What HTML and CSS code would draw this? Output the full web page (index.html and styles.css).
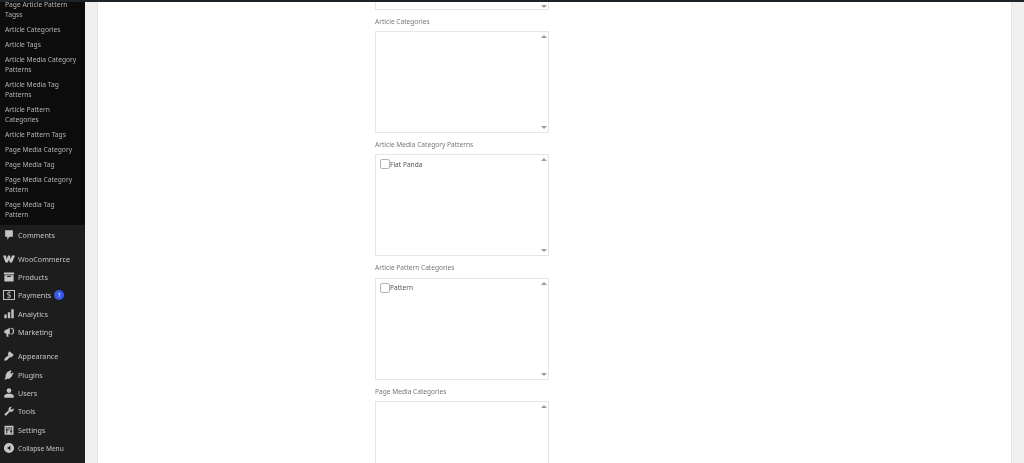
FILE: index.html
```html
<!DOCTYPE html>
<html lang="en">
<head>
  <meta charset="UTF-8"/>
  <title>Edit Article</title>
  <link rel="stylesheet" href="styles.css">
</head>
<body>

  <div class="top-bar"></div>

  <div class="admin-wrap">
    <nav class="admin-menu">
      <ul class="submenu">
        <li>Page Article Pattern Tagss</li>
        <li>Article Categories</li>
        <li>Article Tags</li>
        <li>Article Media Category Patterns</li>
        <li>Article Media Tag Patterns</li>
        <li>Article Pattern Categories</li>
        <li>Article Pattern Tags</li>
        <li>Page Media Category</li>
        <li>Page Media Tag</li>
        <li>Page Media Category Pattern</li>
        <li>Page Media Tag Pattern</li>
      </ul>

      <ul class="main-menu">
        <li class="menu-item">
          <svg class="menu-icon" viewBox="-1 -1 14 14"><path d="M1.500 .5h9v7.500H6.500L4 11.500V8H1.500z"/></svg>
          <span class="menu-label">Comments</span>
        </li>
        <li class="menu-sep"></li>
        <li class="menu-item">
          <svg class="menu-icon" viewBox="0 0 12 12"><path d="M0 2.500h3l.6 3.700L5 2.500h2l.6 3.700L9 2.500h3L9 9.500H6.800L6 6.500 4.700 9.500H2.500z"/></svg>
          <span class="menu-label">WooCommerce</span>
        </li>
        <li class="menu-item">
          <svg class="menu-icon" viewBox="-.5 -.5 13 13"><path d="M0.500 1h11v2.300h-11zM1 4h10V11H1zM4 5v1h4V5z" fill-rule="evenodd"/></svg>
          <span class="menu-label">Products</span>
        </li>
        <li class="menu-item">
          <svg class="menu-icon" viewBox="0 0 12 12"><rect x="0.500" y="1.500" width="11" height="9" fill="none" stroke="currentColor"/><text x="6" y="9" font-size="8" font-family="Noto Sans" text-anchor="middle">$</text></svg>
          <span class="menu-label">Payments</span>
          <span class="badge">1</span>
        </li>
        <li class="menu-item">
          <svg class="menu-icon" viewBox="-1 -1 14 14"><path d="M.5 6.500h2.800V11H.5zM4.600 4h2.800v7H4.600zM8.700 .5h2.800V11H8.700z"/></svg>
          <span class="menu-label">Analytics</span>
        </li>
        <li class="menu-item">
          <svg class="menu-icon" viewBox="-1 -1 14 14"><path d="M.5 4.500 7 1v8L5 8l.6 3.500H3.300L2.800 7.500H.5z"/><path d="M8 1a4 4 0 0 1 0 8l-.4-1a3 3 0 0 0 0-6z"/></svg>
          <span class="menu-label">Marketing</span>
        </li>
        <li class="menu-sep"></li>
        <li class="menu-item">
          <svg class="menu-icon" viewBox="-1 -1 14 14"><path d="M6.500 .5 11.500 4.500 8.500 8 7.500 6.800 3.500 11 .5 11.500 1 8.500 5.500 5 4.500 3.500z"/></svg>
          <span class="menu-label">Appearance</span>
        </li>
        <li class="menu-item">
          <svg class="menu-icon" viewBox="-1 -1 14 14"><path d="M8 .5 9 1.500 7.500 3.500l1 1L10.500 3l1 1L9.500 6 10 7 6.500 10.500H3.500L2 11.500 .8 10.500 2 9V6l2-3.500z"/></svg>
          <span class="menu-label">Plugins</span>
        </li>
        <li class="menu-item">
          <svg class="menu-icon" viewBox="-1 -1 14 14"><circle cx="6" cy="3.200" r="2.700"/><path d="M.5 8.500 3.500 7h5l3 1.500V11.500H.5z"/></svg>
          <span class="menu-label">Users</span>
        </li>
        <li class="menu-item">
          <svg class="menu-icon" viewBox="-1 -1 14 14"><path d="M11.500 2.800 9.300 4.500 7.800 3.300 9.300 1A3.200 3.200 0 0 0 5.600 5.200L.5 9.800 2.300 11.700 7 6.600A3.200 3.200 0 0 0 11.500 2.800z"/></svg>
          <span class="menu-label">Tools</span>
        </li>
        <li class="menu-item">
          <svg class="menu-icon" viewBox="-1 -1 14 14"><path fill-rule="evenodd" d="M.8 1h10.400v10.400H.8zM3 2.500v3H2.200v1H3v3.500h1V6.500h.8v-1H4v-3zM8 2.500v4.500h-.8v1H8v2h1V8h.8V7H9V2.500zM5.500 2.500V6.500h1V2.500z"/></svg>
          <span class="menu-label">Settings</span>
        </li>
        <li class="menu-item">
          <svg class="menu-icon" viewBox="-.5 -.5 13 13"><path fill-rule="evenodd" d="M6 .5a5.500 5.500 0 1 1 0 11A5.500 5.500 0 0 1 6 .5zM7.500 3.500 3.800 6l3.700 2.500z"/></svg>
          <span class="menu-label collapse-text">Collapse Menu</span>
        </li>
      </ul>
    </nav>

    <main class="page-body">
      <div class="page-panel">
        <form class="term-form">
          <div class="term-box term-box-cut">
            <span class="scroll-col"><i class="arrow-down"></i></span>
          </div>

          <label class="term-label">Article Categories</label>
          <div class="term-box">
            <div class="term-list"></div>
            <span class="scroll-col"><i class="arrow-up"></i><i class="arrow-down"></i></span>
          </div>

          <label class="term-label">Article Media Category Patterns</label>
          <div class="term-box">
            <div class="term-list">
              <label class="term-check"><input type="checkbox"/>Fiat Panda</label>
            </div>
            <span class="scroll-col"><i class="arrow-up"></i><i class="arrow-down"></i></span>
          </div>

          <label class="term-label">Article Pattern Categories</label>
          <div class="term-box">
            <div class="term-list">
              <label class="term-check"><input type="checkbox"/>Pattern</label>
            </div>
            <span class="scroll-col"><i class="arrow-up"></i><i class="arrow-down"></i></span>
          </div>

          <label class="term-label">Page Media Categories</label>
          <div class="term-box">
            <div class="term-list"></div>
            <span class="scroll-col"><i class="arrow-up"></i><i class="arrow-down"></i></span>
          </div>
        </form>
      </div>
    </main>
  </div>

</body>
</html>
```

FILE: styles.css
```css
html, body {
  height: 463px;
  overflow: hidden;
}

body {
  margin: 0;
  font-family: 'Noto Sans', sans-serif;
  background: #f0f0f0;
}

.top-bar {
  height: 2px;
  background: #1d2327;
}

.admin-wrap {
  display: flex;
  height: 461px;
}

/* the screenshot is scaled down, so text is soft and grey */
.submenu,
.menu-label,
.menu-icon,
.term-form {
  filter: grayscale(1) blur(0.3px);
}

/* left menu */
.admin-menu {
  width: 85px;
  flex-shrink: 0;
  background: #1d1d1d;
  color: #c3c4c7;
  font-size: 7.200px;
}

.admin-menu ul {
  list-style: none;
  margin: 0;
  padding: 0;
}

.admin-menu .submenu {
  display: flex;
  flex-direction: column;
  height: 223px;
  background: #0c0c0c;
  color: #b4b4b5;
  font-size: 6.700px;
  line-height: 10px;
}

.submenu li {
  padding: 2.500px 7px 2.500px 5px;
}

.submenu li:first-child {
  padding-top: 0;
  margin-top: -2.500px;
}

.admin-menu .main-menu {
  padding-top: 0.500px;
}

.menu-item {
  display: flex;
  align-items: center;
  gap: 3px;
  height: 18.400px;
  padding-left: 3px;
}

.menu-sep {
  height: 5.600px;
}

.menu-icon {
  width: 12px;
  height: 12px;
  fill: #c3c4c7;
  color: #c3c4c7;
  flex-shrink: 0;
}

.collapse-text {
  font-size: 6.600px;
}

.badge {
  width: 10px;
  height: 10px;
  border-radius: 50%;
  background: #3858e9;
  color: #fff;
  font-size: 6px;
  line-height: 10px;
  text-align: center;
}

/* content */
.page-body {
  flex: 1;
  padding: 0 12px;
}

.page-panel {
  height: 100%;
  background: #fff;
  border-left: 1px solid #e4e4e4;
  border-right: 1px solid #e4e4e4;
  padding-left: 277px;
}

.term-form {
  width: 174px;
}

.term-label {
  display: block;
  height: 21.200px;
  padding-top: 6px;
  box-sizing: border-box;
  color: #777;
  font-size: 6.600px;
  line-height: 11px;
}

.term-box {
  display: flex;
  height: 102px;
  box-sizing: border-box;
  border: 1px solid #e6e6e6;
  background: #fff;
}

.term-box-cut {
  height: 8px;
  border-top: none;
}

.term-list {
  flex: 1;
  padding-top: 3.500px;
  padding-left: 4px;
}

.term-check {
  display: flex;
  align-items: center;
  color: #555;
  font-size: 6.600px;
  line-height: 11px;
}

.term-check input {
  appearance: none;
  width: 10px;
  height: 10px;
  margin: 0;
  border: 1px solid #b4b4b4;
  border-radius: 2px;
  background: #fff;
}

.scroll-col {
  display: flex;
  flex-direction: column;
  align-items: center;
  justify-content: space-between;
  width: 8px;
  margin-left: auto;
  padding: 3px 0;
  box-sizing: border-box;
}

.term-box-cut .scroll-col {
  justify-content: flex-end;
  padding: 0 0 1px;
}

.arrow-up, .arrow-down {
  display: block;
  width: 0;
  height: 0;
  border-left: 3px solid transparent;
  border-right: 3px solid transparent;
}

.arrow-up {
  border-bottom: 3px solid #999;
}

.arrow-down {
  border-top: 3px solid #999;
}
```
